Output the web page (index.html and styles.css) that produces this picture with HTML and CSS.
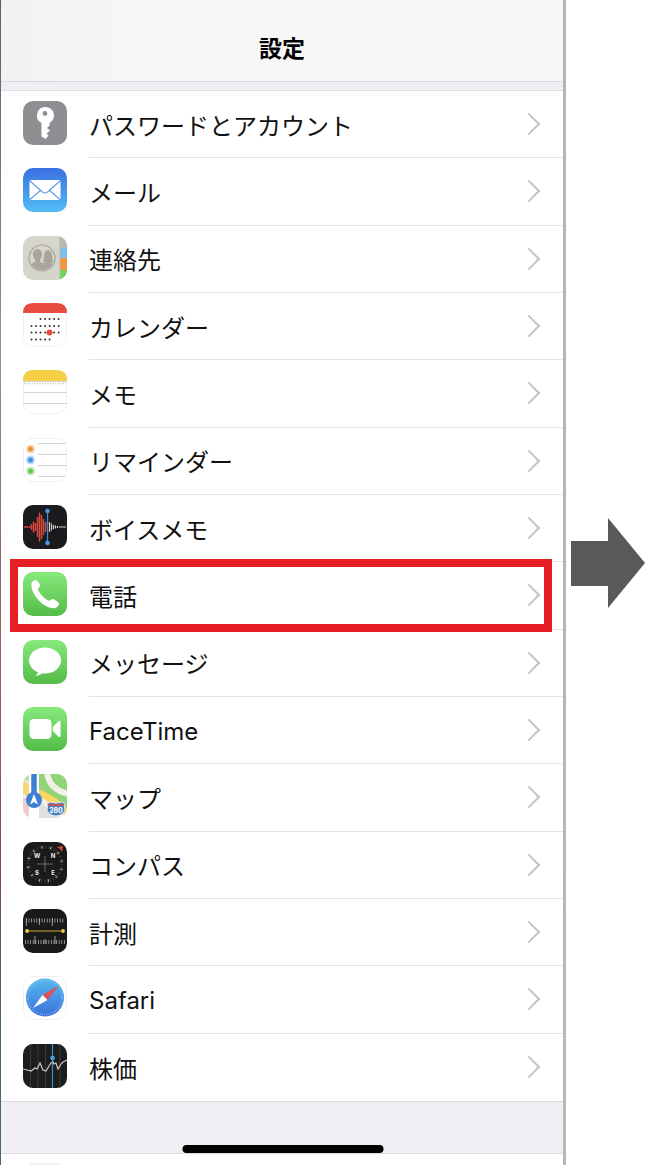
FILE: index.html
```html
<!DOCTYPE html>
<html lang="ja">
<head>
  <meta charset="UTF-8">
  <meta name="viewport" content="width=device-width, initial-scale=1.0">
  <title>設定</title>
  <link rel="stylesheet" href="styles.css">
</head>
<body>
  <div class="page">
    <main class="phone">
      <header class="navbar">
        <h1>設定</h1>
      </header>

      <ul class="list">
        <li>
          <a href="#passwords">
            <svg class="icon" viewBox="0 0 44 44">
              <rect width="44" height="44" rx="10" fill="#8e8e93"/>
              <path d="M22 6a8.500 8.500 0 0 0-3.500 16v13.500l4 2.500 3-3.500-2-2 3.500-3-3-2.500 2.500-2.500V22A8.500 8.500 0 0 0 22 6z" fill="#fff"/>
              <circle cx="22" cy="12.500" r="2.400" fill="#8e8e93"/>
            </svg>
            <span>パスワードとアカウント</span>
          </a>
        </li>
        <li>
          <a href="#mail">
            <svg class="icon" viewBox="0 0 44 44">
              <defs>
                <linearGradient id="blue" x1="0" y1="0" x2="0" y2="1">
                  <stop offset="0" stop-color="#3a6fe2"/>
                  <stop offset="1" stop-color="#52bdf5"/>
                </linearGradient>
              </defs>
              <rect width="44" height="44" rx="10" fill="url(#blue)"/>
              <rect x="6.500" y="12" width="31" height="20" rx="2" fill="#fff"/>
              <path d="M7 13l12.500 11q2.500 2 5 0L37 13M7 31.500l11-9.500M37 31.500L26 22" fill="none" stroke="#5d9ce6" stroke-width="1.100"/>
            </svg>
            <span>メール</span>
          </a>
        </li>
        <li>
          <a href="#contacts">
            <svg class="icon" viewBox="0 0 44 44">
              <defs>
                <clipPath id="tile"><rect width="44" height="44" rx="10"/></clipPath>
                <clipPath id="face"><circle cx="19" cy="22" r="12"/></clipPath>
              </defs>
              <g clip-path="url(#tile)">
                <rect width="44" height="44" fill="#d6d5cb"/>
                <rect x="37" width="7" height="12" fill="#b9b8b4"/>
                <rect x="37" y="12" width="7" height="10" fill="#7cc0ee"/>
                <rect x="37" y="22" width="7" height="12" fill="#ee973d"/>
                <rect x="37" y="34" width="7" height="10" fill="#6fd45c"/>
                <path d="M37 0v44" stroke="#b9b7ac" stroke-width="1"/>
              </g>
              <circle cx="19" cy="22" r="13" fill="none" stroke="#a9a59d" stroke-width="1.200"/>
              <g clip-path="url(#face)" fill="#a9a59d">
                <ellipse cx="14.500" cy="18.500" rx="4.500" ry="5.500"/>
                <path d="M12 22h5v4q5 1 5 9H6q0-7 6-9z"/>
                <path d="M20 26q1-2 1-6 0-6 4-6t4 6q0 4 2 6l-3 1q4 2 5 8H20l-1-6q0-2 4-3z"/>
              </g>
            </svg>
            <span>連絡先</span>
          </a>
        </li>
        <li>
          <a href="#calendar">
            <svg class="icon" viewBox="0 0 44 44">
              <rect class="white-tile" x=".5" y=".5" width="43" height="43" rx="10"/>
              <path d="M0 10Q0 0 10 0h24q10 0 10 10z" fill="#e74c3e"/>
              <g fill="none" stroke="#333" stroke-width="2" stroke-linecap="round">
                <path d="M17.500 16h18.200M8.500 23h27.200M8.500 29.500h27.200M8.500 36.500h18.200" stroke-dasharray="0 4.530"/>
              </g>
              <circle cx="26.500" cy="29.500" r="3" fill="#e5493d"/>
            </svg>
            <span>カレンダー</span>
          </a>
        </li>
        <li>
          <a href="#notes">
            <svg class="icon" viewBox="0 0 44 44">
              <rect class="white-tile" x=".5" y=".5" width="43" height="43" rx="10"/>
              <path d="M0 11V10Q0 0 10 0h24q10 0 10 10v1z" fill="#f5cf46"/>
              <path d="M0 11.500h44M0 22.500h44M0 33.500h44" stroke="#d4d4d4"/>
              <path d="M1 13.500h42" stroke="#bbb" stroke-width="1.500" stroke-dasharray="1 1.600"/>
            </svg>
            <span>メモ</span>
          </a>
        </li>
        <li>
          <a href="#reminders">
            <svg class="icon" viewBox="0 0 44 44">
              <rect class="white-tile" x=".5" y=".5" width="43" height="43" rx="10"/>
              <path d="M15 5.500h28M15 16.500h29M15 27.500h29M15 38.500h27" stroke="#d4d4d4"/>
              <g fill-opacity=".4">
                <circle cx="7.500" cy="11" r="4.500" fill="#f29a45"/>
                <circle cx="7.500" cy="22" r="4.500" fill="#4a9ff0"/>
                <circle cx="7.500" cy="33" r="4.500" fill="#74d65a"/>
              </g>
              <circle cx="7.500" cy="11" r="2.500" fill="#e9913f"/>
              <circle cx="7.500" cy="22" r="2.500" fill="#438fdf"/>
              <circle cx="7.500" cy="33" r="2.500" fill="#68c552"/>
            </svg>
            <span>リマインダー</span>
          </a>
        </li>
        <li>
          <a href="#voice-memos">
            <svg class="icon" viewBox="0 0 44 44">
              <rect width="44" height="44" rx="10" fill="#1b1b1d"/>
              <path d="M1 22h4M6.500 21v2M8.500 19v6M10.500 16.500v11M12.500 18v8M14.500 12v20M16.500 7.500v29M18.500 10v24M20.500 14v16M22.500 17v10" stroke="#d9483c" stroke-width="1.500"/>
              <path d="M26.500 17v10M28.500 18.500v7M30.500 20v4M32.500 20.500v3M34.500 21v2M36 22h7" stroke="#d0d0d0" stroke-width="1.200"/>
              <path d="M24.500 5v34" stroke="#3d8ad4" stroke-width="1.300"/>
              <circle cx="24.500" cy="6" r="2.300" fill="#4a97e0"/>
              <circle cx="24.500" cy="38" r="2.300" fill="#4a97e0"/>
            </svg>
            <span>ボイスメモ</span>
          </a>
        </li>
        <li class="highlight">
          <a href="#phone">
            <svg class="icon" viewBox="0 0 44 44">
              <defs>
                <linearGradient id="green" x1="0" y1="0" x2="0" y2="1">
                  <stop offset="0" stop-color="#86ea7c"/>
                  <stop offset="1" stop-color="#54bb48"/>
                </linearGradient>
              </defs>
              <rect width="44" height="44" rx="10" fill="url(#green)"/>
              <path d="M8.500 11.500c.5-2 3-4 4.500-3.500s4.500 4.500 4 6-2.500 2-2 3.500c1.500 4 5.500 8.500 10.500 11 1.800.8 2.500-2 4.500-1.500 1.500.3 5.500 3 6 4.500s-2 4.500-4.500 4.700C20.500 37 7 21.500 8.500 11.500z" fill="#fff"/>
            </svg>
            <span>電話</span>
          </a>
        </li>
        <li>
          <a href="#messages">
            <svg class="icon" viewBox="0 0 44 44">
              <rect width="44" height="44" rx="10" fill="url(#green)"/>
              <ellipse cx="22" cy="20.500" rx="16" ry="13" fill="#fff"/>
              <path d="M15.500 30q0 4-3.500 5.800 5.500 0 8-3.800z" fill="#fff"/>
            </svg>
            <span>メッセージ</span>
          </a>
        </li>
        <li>
          <a href="#facetime">
            <svg class="icon" viewBox="0 0 44 44">
              <rect width="44" height="44" rx="10" fill="url(#green)"/>
              <rect x="6.500" y="12" width="22" height="20" rx="4.500" fill="#fff"/>
              <path d="M29.800 20l5.700-5.700q2-1.300 2 .7v14q0 2-2 .7L29.800 24z" fill="#fff"/>
            </svg>
            <span class="latin">FaceTime</span>
          </a>
        </li>
        <li>
          <a href="#maps">
            <svg class="icon" viewBox="0 0 44 44">
              <g clip-path="url(#tile)">
                <rect width="44" height="44" fill="#f3efe7"/>
                <path d="M0 0h8v9L0 5z" fill="#b7dfa8"/>
                <path d="M0 6l7 5v12L0 20z" fill="#f7d878"/>
                <path d="M0 23l7 4v17H0z" fill="#f2c9cb"/>
                <path d="M16 0h28v36L16 18z" fill="#8fd477"/>
                <path d="M16 27l20 17H16z" fill="#dfe0dc"/>
                <path d="M24-2q2 18 22 22" fill="none" stroke="#f3efe7" stroke-width="6"/>
                <path d="M15 18.500q17 6 31 23" fill="none" stroke="#f9d562" stroke-width="7"/>
                <path d="M11 0v44" stroke="#fff" stroke-width="10"/>
                <path d="M11 0v26" stroke="#3b80d4" stroke-width="5.500"/>
                <circle cx="11" cy="26" r="8" fill="#3b80d4"/>
                <path d="M11 20l4 10.500-4-2.500-4 2.500z" fill="#fff"/>
                <path d="M24 30l3-2q6 2 12 0l3 2q-1 3 0 6-1 5-9 6-8-1-9-6 1-3 0-6z" fill="#4880c2" stroke="#dfe8f0"/>
                <path d="M26 29q7 2.500 14 0v3H26z" fill="#d45354"/>
                <text x="33" y="39" class="shield">280</text>
              </g>
            </svg>
            <span>マップ</span>
          </a>
        </li>
        <li>
          <a href="#compass">
            <svg class="icon" viewBox="0 0 44 44">
              <rect width="44" height="44" rx="10" fill="#1a1a1b"/>
              <circle cx="22" cy="22" r="17" fill="none" stroke="#444" stroke-width="3" stroke-dasharray=".8 2.170"/>
              <circle cx="22" cy="22" r="17" fill="none" stroke="#ccc" stroke-width="3" stroke-dasharray=".8 8.100" stroke-dashoffset="4"/>
              <path d="M22 14v16M14 22h16" stroke="#6d6d6d"/>
              <path d="M34 5l6-1-1 6-2-3z" fill="#dd4937"/>
              <g class="points">
                <text x="14" y="16">W</text>
                <text x="30" y="16">N</text>
                <text x="14" y="33">S</text>
                <text x="30" y="33">E</text>
              </g>
            </svg>
            <span>コンパス</span>
          </a>
        </li>
        <li>
          <a href="#measure">
            <svg class="icon" viewBox="0 0 44 44">
              <rect width="44" height="44" rx="10" fill="#1a1a1b"/>
              <path d="M3 11.500h39M2 33h41" stroke="#aaa" stroke-width="4" stroke-dasharray=".8 1.800"/>
              <path d="M3.300 9v8M16.300 9v7M29.300 9v8M12 27v8M22 30v5M32 27v8" stroke="#bbb" stroke-width=".8"/>
              <path d="M4 22h36" stroke="#c6a83b" stroke-width="1.200"/>
              <circle cx="4" cy="22" r="1.900" fill="#f2cd42"/>
              <circle cx="40" cy="22" r="1.900" fill="#f2cd42"/>
            </svg>
            <span>計測</span>
          </a>
        </li>
        <li>
          <a href="#safari">
            <svg class="icon" viewBox="0 0 44 44">
              <defs>
                <linearGradient id="dial" x1="0" y1="0" x2="0" y2="1">
                  <stop offset="0" stop-color="#55b9ef"/>
                  <stop offset="1" stop-color="#3971dc"/>
                </linearGradient>
              </defs>
              <rect class="white-tile" x=".5" y=".5" width="43" height="43" rx="10"/>
              <circle cx="22" cy="21.500" r="19" fill="url(#dial)"/>
              <circle cx="22" cy="21.500" r="17" fill="none" stroke="#a9d4f5" stroke-width="1.500" stroke-dasharray=".6 1.600"/>
              <path d="M36 9.500L19.500 19l5 5z" fill="#dd5258"/>
              <path d="M10 32l9.500-13 5 5z" fill="#fff"/>
            </svg>
            <span class="latin">Safari</span>
          </a>
        </li>
        <li>
          <a href="#stocks">
            <svg class="icon" viewBox="0 0 44 44">
              <rect width="44" height="44" rx="10" fill="#1d1d1e"/>
              <path d="M7.500 0v44M15 0v44M22.500 0v44M37 0v44" stroke="#3c3c3e"/>
              <path d="M29.500 0v44" stroke="#3592cd" stroke-width="1.200"/>
              <path d="M0 25l4 1 4 1 4-3 2 1 3-6 3 7 3 1 3-5 2-3 2-1 1 2 2-1 2 6 3-5 2-2 4-2" fill="none" stroke="#c9c9c9" stroke-width="1.200"/>
              <circle cx="29.500" cy="14" r="2.300" fill="#45a5e3"/>
            </svg>
            <span>株価</span>
          </a>
        </li>
      </ul>

      <div class="next-list">
        <span class="next-icon"></span>
      </div>
      <div class="home-bar"></div>
    </main>

    <div class="next-step">
      <svg class="arrow" viewBox="0 0 74 90">
        <path d="M0 23h37V0l37 45-37 45V68H0z" fill="#595959"/>
      </svg>
    </div>
  </div>
</body>
</html>
```
FILE: styles.css
```css
* {
  box-sizing: border-box;
}
body {
  margin: 0;
  background-color: #fff;
  color: #111;
  font-family: Inter, "Noto Sans CJK JP", sans-serif;
}
.page {
  display: grid;
  grid-template-columns: 1fr 88px;
  min-height: 100vh;
}

/* phone screen */
.phone {
  position: relative;
  display: flex;
  flex-direction: column;
  padding: 0 3px 0 1px;
  background:
    linear-gradient(#4f6478, #8b929c 30%, #93666c 48%, #a05a55 60%, #824660 75%, #48667a 88%) left / 1px 100% no-repeat,
    linear-gradient(#b5b5b5, #bcb2b4 50%, #b3bab9) right / 3px 100% no-repeat,
    #efeff4;
}
.navbar {
  height: 82px;
  padding-top: 31px;
  border-bottom: 1px solid #d9d9de;
  background: linear-gradient(to right, #f2f2f1, #f7f7f8 30%);
}
.navbar h1 {
  margin: 0;
  color: #000;
  font-size: 23px;
  font-weight: 700;
  line-height: 36px;
  text-align: center;
}
.list {
  display: grid;
  grid-auto-rows: 1fr;
  min-height: 1012px;
  margin: 8px 0 0;
  padding: 0;
  border-top: 1px solid #e0e0e4;
  border-bottom: 1px solid #dcdce0;
  background-color: #fff;
  list-style: none;
}
.list li {
  position: relative;
}
.list a {
  display: flex;
  align-items: center;
  gap: 22px;
  height: 100%;
  padding-left: 22px;
  color: inherit;
  text-decoration: none;
}
.icon {
  flex: none;
  width: 44px;
  height: 44px;
  margin-bottom: 3px;
}
.list span {
  display: flex;
  flex: 1;
  align-items: center;
  justify-content: space-between;
  align-self: stretch;
  padding-right: 26px;
  border-bottom: 1px solid #e3e3e5;
  font-size: 24px;
}
.list li:last-child span {
  border-bottom: none;
}
.list span::after {
  content: "";
  width: 14px;
  height: 14px;
  border: solid #c4c4c7;
  border-width: 2px 2px 0 0;
  transform: rotate(45deg);
}
/* same baseline as the Japanese labels */
.list .latin {
  align-items: baseline;
  padding-top: 20px;
}
.list .latin::after {
  align-self: center;
  margin-bottom: 20px;
}
.highlight::after {
  content: "";
  position: absolute;
  inset: -3px 11px -2px 9px;
  border: 8px solid #e61e25;
  pointer-events: none;
}

/* icon parts */
.white-tile {
  fill: #fff;
  stroke: #f0f0f0;
}
.shield {
  fill: #fff;
  font-size: 7px;
  font-weight: 700;
  text-anchor: middle;
}
.points {
  fill: #eee;
  font-size: 6px;
  font-weight: 700;
  text-anchor: middle;
}

.next-list {
  flex: 1;
  margin-top: 51px;
  padding: 9px 0 0 29px;
  border-top: 1px solid #dcdce0;
  background-color: #fff;
}
.next-icon {
  display: block;
  width: 30px;
  height: 2px;
  background-color: #f1f1f3;
}
.home-bar {
  position: absolute;
  bottom: 12px;
  left: 50%;
  width: 201px;
  height: 8px;
  border-radius: 4px;
  background-color: #000;
  transform: translateX(-50%);
}

/* arrow to the next screen */
.next-step {
  display: flex;
  align-items: center;
  padding: 0 9px 39px 5px;
}
.arrow {
  width: 100%;
}
```
